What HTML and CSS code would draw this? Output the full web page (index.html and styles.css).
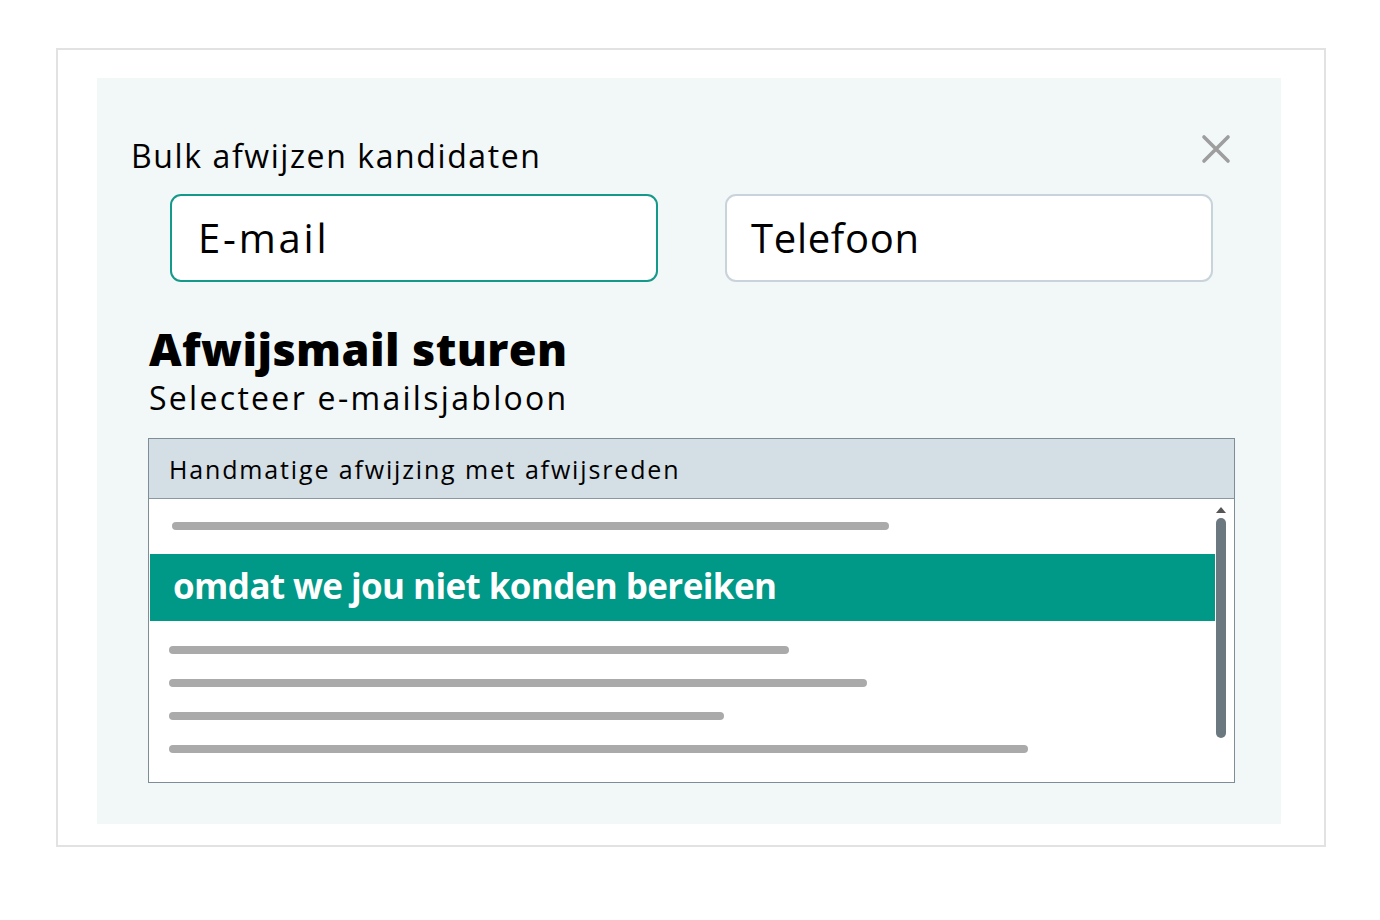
FILE: index.html
```html
<!DOCTYPE html>
<html lang="nl">
<head>
<meta charset="utf-8">
<title>Bulk afwijzen kandidaten</title>
<link rel="stylesheet" href="styles.css">
</head>
<body>
<div class="frame">
  <div class="panel">
    <div class="title-row">
      <h1 class="title">Bulk afwijzen kandidaten</h1>
      <button class="close" aria-label="Sluiten">
        <svg width="30" height="30" viewBox="0 0 30 30"><path d="M3 3 L27 27 M27 3 L3 27" stroke="#9e9e9e" stroke-width="3.6" stroke-linecap="round" fill="none"/></svg>
      </button>
    </div>
    <div class="fields">
      <div class="field active">E-mail</div>
      <div class="field">Telefoon</div>
    </div>
    <div class="section">
      <h2 class="heading">Afwijsmail sturen</h2>
      <p class="sub">Selecteer e-mailsjabloon</p>
      <div class="select">
        <div class="select-head">Handmatige afwijzing met afwijsreden</div>
        <div class="list">
          <div class="items">
            <div class="line first" style="width:717px"></div>
            <div class="option">omdat we jou niet konden bereiken</div>
            <div class="line" style="width:620px"></div>
            <div class="line" style="width:698px"></div>
            <div class="line" style="width:555px"></div>
            <div class="line" style="width:859px"></div>
          </div>
          <div class="scrollbar">
            <div class="arrow"></div>
            <div class="thumb"></div>
          </div>
        </div>
      </div>
    </div>
  </div>
</div>
</body>
</html>
```
FILE: styles.css
```css
* { box-sizing: border-box; }
body {
  margin: 0;
  background: #fff;
  font-family: "Open Sans", "Lato", sans-serif;
  color: #000;
}
.frame {
  margin: 48px 0 0 56px;
  width: 1270px;
  height: 799px;
  border: 2px solid #e2e2e2;
  padding: 28px 0 0 39px;
}
.panel {
  width: 1184px;
  height: 746px;
  background: #f2f7f7;
}
.title-row {
  display: flex;
  justify-content: space-between;
  align-items: flex-start;
  padding: 56px 50px 0 34px;
}
.title {
  margin: 0;
  font-size: 32px;
  font-weight: 400;
  line-height: 44px;
  letter-spacing: 1.6px;
}
.close {
  border: 0;
  background: none;
  padding: 0;
  margin-top: 0;
  width: 30px;
  height: 30px;
  display: block;
}
.close svg { display: block; }
.fields {
  display: flex;
  gap: 67px;
  margin: 16px 0 0 73px;
}
.field {
  width: 488px;
  height: 88px;
  background: #fff;
  border: 2px solid #c9d3db;
  border-radius: 11px;
  font-size: 40px;
  line-height: 84px;
  padding-left: 24px;
  letter-spacing: 0.7px;
}
.field.active {
  border-color: #15998a;
  padding-left: 26px;
  letter-spacing: 2.8px;
}
.section {
  margin: 41px 0 0 51px;
}
.heading {
  margin: 0 0 0 1px;
  font-size: 45px;
  font-weight: 800;
  line-height: 52px;
  letter-spacing: 0.4px;
}
.sub {
  margin: 1px 0 0 1px;
  font-size: 32px;
  line-height: 44px;
  letter-spacing: 2.3px;
}
.select {
  margin-top: 18px;
  width: 1087px;
  border: 1px solid #7f8d96;
}
.select-head {
  height: 60px;
  background: #d3dee5;
  border-bottom: 1px solid #8a98a2;
  font-size: 25px;
  line-height: 60px;
  padding-left: 20px;
  letter-spacing: 1.85px;
}
.list {
  display: flex;
  background: #fff;
  height: 283px;
}
.items {
  flex: 1;
  padding-top: 23px;
}
.line {
  height: 8px;
  border-radius: 4px;
  background: #aaaaaa;
  margin: 0 0 25px 20px;
}
.line.first {
  margin: 0 0 24px 23px;
}
.option {
  height: 67px;
  background: #009886;
  color: #fff;
  font-family: "Open Sans", sans-serif;
  font-weight: 700;
  font-size: 35px;
  line-height: 64px;
  padding-left: 23px;
  letter-spacing: -0.6px;
  margin: 0 0 25px 1px;
}
.scrollbar {
  width: 19px;
  display: flex;
  flex-direction: column;
  align-items: center;
  padding: 8px 8px 0 0;
}
.arrow {
  width: 0;
  height: 0;
  border-left: 5px solid transparent;
  border-right: 5px solid transparent;
  border-bottom: 6px solid #555;
}
.thumb {
  margin-top: 5px;
  width: 10px;
  height: 220px;
  border-radius: 5px;
  background: #6b7880;
  flex-shrink: 0;
}
```
